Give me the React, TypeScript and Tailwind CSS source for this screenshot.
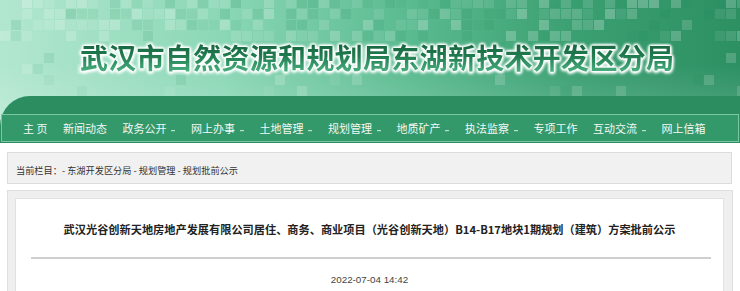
import React from "react";

const CJK = '"Microsoft YaHei", "Noto Sans CJK SC", "Liberation Sans", sans-serif';

type Cell = { x: number; y: number; fill: string; op: number };

// seeded random so the mosaic stays the same on every render
function makeRand(seed: number) {
    let s = seed;
    return () => {
        s = (s * 9301 + 49297) % 233280;
        return s / 233280;
    };
}

const cells: Cell[] = (() => {
    const r = makeRand(17);
    const out: Cell[] = [];
    for (let row = 0; row < 9; row++) {
        for (let col = 0; col < 68; col++) {
            const dense = row < 4 ? 0.75 - row * 0.12 : 0.09;
            if (r() > dense) continue;
            const light = r() < 0.6;
            out.push({
                x: col * 11,
                y: row * 11 - 2,
                fill: light ? "#ffffff" : "#1f8a5a",
                op: light ? 0.08 + r() * 0.2 : 0.06 + r() * 0.14,
            });
        }
    }
    return out;
})();

function Mosaic() {
    return (
        <svg className="absolute inset-0 pointer-events-none" width="740" height="143" viewBox="0 0 740 143">
            <defs>
                <linearGradient id="fadeY" x1="0" y1="0" x2="0" y2="1">
                    <stop offset="0" stopColor="#fff" stopOpacity="1" />
                    <stop offset="0.45" stopColor="#fff" stopOpacity="0.7" />
                    <stop offset="1" stopColor="#fff" stopOpacity="0.5" />
                </linearGradient>
                <mask id="m">
                    <rect width="740" height="143" fill="url(#fadeY)" />
                </mask>
            </defs>
            <g mask="url(#m)">
                {cells.map((c, i) => (
                    <rect key={i} x={c.x} y={c.y} width="10" height="10" fill={c.fill} fillOpacity={c.op} />
                ))}
            </g>
        </svg>
    );
}

const navItems = [
    { label: "主 页", drop: false },
    { label: "新闻动态", drop: false },
    { label: "政务公开", drop: true },
    { label: "网上办事", drop: true },
    { label: "土地管理", drop: true },
    { label: "规划管理", drop: true },
    { label: "地质矿产", drop: true },
    { label: "执法监察", drop: true },
    { label: "专项工作", drop: false },
    { label: "互动交流", drop: true },
    { label: "网上信箱", drop: false },
];

export default function App() {
    return (
        <div className="w-[740px] h-[291px] overflow-hidden bg-white" style={{ fontFamily: CJK }}>
            {/* banner + nav */}
            <div className="relative bg-[linear-gradient(90deg,#b2e7cf_0%,#8bd7b6_30%,#5bbb90_55%,#3a9f71_78%,#2c9063_100%)]">
                <div className="absolute inset-0 bg-[linear-gradient(180deg,rgba(255,255,255,0)_0%,rgba(255,255,255,0)_45%,rgba(255,255,255,0.25)_100%)]" />
                <Mosaic />
                <div className="relative h-[96px] flex items-start pt-[41px] pl-[80px]">
                    <h1
                        className="text-[28px] leading-[32px] font-bold tracking-[0.3px] bg-[linear-gradient(180deg,#16603c_0%,#1f7a4e_45%,#4cb383_100%)] bg-clip-text text-transparent [filter:drop-shadow(0_0_1px_#ffffff)_drop-shadow(0_0_1px_#ffffff)_drop-shadow(0_0_1px_#ffffff)_drop-shadow(0_1px_1px_rgba(255,255,255,0.9))]"
                    >
                        武汉市自然资源和规划局东湖新技术开发区分局
                    </h1>
                </div>
                <div className="relative bg-[#2b8d60] rounded-tl-[30px] pt-[18px] pb-[1px]">
                    <div className="h-[28px] mx-[1px] border border-[#7cc7a3] bg-[#33986a] flex items-center pl-[21px] gap-[15.5px] text-[#f2faf6] text-[11px]">
                        {navItems.map((item) => (
                            <div key={item.label} className="flex items-center whitespace-pre">
                                <span>{item.label}</span>
                                {item.drop && (
                                    <span className="w-[9px] flex justify-end">
                                        <svg width="4" height="2" viewBox="0 0 4 2" className="mt-[5px]">
                                            <rect width="4" height="1.2" fill="#b9e2cd" />
                                        </svg>
                                    </span>
                                )}
                            </div>
                        ))}
                    </div>
                </div>
            </div>

            {/* breadcrumb */}
            <div className="mx-[7px] mr-[8px] mt-[9px] h-[32px] border border-[#dcdcdc] bg-[#f1f1f1] flex items-end pb-[5px] pl-[8px] text-[9.2px] text-[#333]">
                当前栏目：- 东湖开发区分局 - 规划管理 - 规划批前公示
            </div>

            {/* article */}
            <div className="mx-[7px] mt-[6px] border border-[#dedede] bg-[#efefef] pt-[7px] pl-[7px] pr-[8px] h-[120px]">
                <div className="bg-white border border-[#e2e2e2] h-full">
                    <h2 className="pt-[23px] text-center text-[11.2px] leading-[14px] font-bold text-[#222]">
                        武汉光谷创新天地房地产发展有限公司居住、商务、商业项目（光谷创新天地）B14-B17地块1期规划（建筑）方案批前公示
                    </h2>
                    <div className="mt-[21px] ml-[15px] mr-[12px] border-t-2 border-[#cfcfcf]" />
                    <div className="mt-[14px] text-center text-[9.8px] text-[#444]" style={{ fontFamily: '"Liberation Sans", Arial, sans-serif' }}>
                        2022-07-04 14:42
                    </div>
                </div>
            </div>
        </div>
    );
}
